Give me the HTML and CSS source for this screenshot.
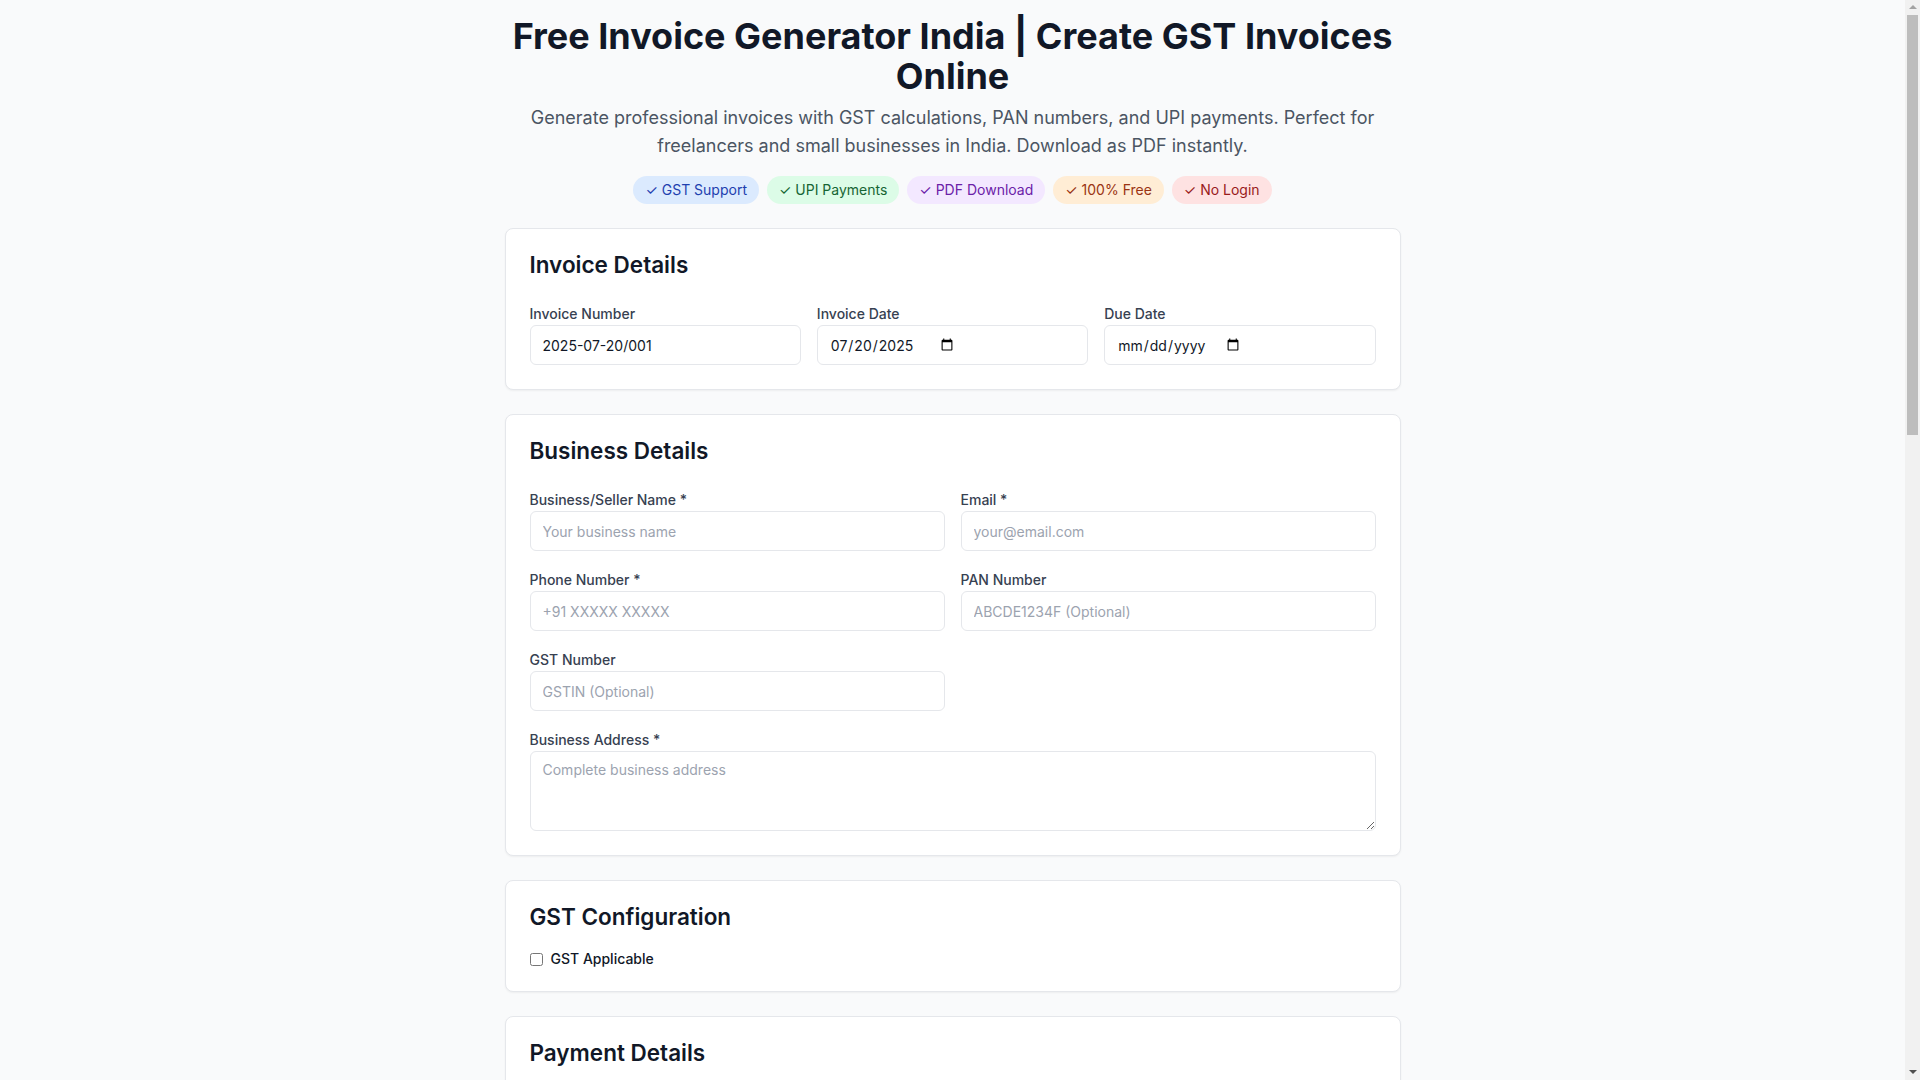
FILE: index.html
```html
<!DOCTYPE html>
<html lang="en">
<head>
<meta charset="utf-8">
<title>Free Invoice Generator India | Create GST Invoices Online</title>
<link rel="stylesheet" href="styles.css">
</head>
<body>
<main class="page">
  <header class="hero">
    <h1 class="hero-title">Free Invoice Generator India | Create GST Invoices Online</h1>
    <p class="hero-sub">Generate professional invoices with GST calculations, PAN numbers, and UPI payments. Perfect for freelancers and small businesses in India. Download as PDF instantly.</p>
    <div class="badges">
      <span class="badge badge-blue">✓ GST Support</span>
      <span class="badge badge-green">✓ UPI Payments</span>
      <span class="badge badge-purple">✓ PDF Download</span>
      <span class="badge badge-orange">✓ 100% Free</span>
      <span class="badge badge-red">✓ No Login</span>
    </div>
  </header>

  <section class="card">
    <h2 class="card-title">Invoice Details</h2>
    <div class="grid grid-3">
      <div class="field">
        <label class="label">Invoice Number</label>
        <input class="input" type="text" value="2025-07-20/001">
      </div>
      <div class="field">
        <label class="label">Invoice Date</label>
        <input class="input input-date" type="date" value="2025-07-20">
      </div>
      <div class="field">
        <label class="label">Due Date</label>
        <input class="input input-date" type="date">
      </div>
    </div>
  </section>

  <section class="card">
    <h2 class="card-title">Business Details</h2>
    <div class="grid grid-2">
      <div class="field">
        <label class="label">Business/Seller Name *</label>
        <input class="input" type="text" placeholder="Your business name">
      </div>
      <div class="field">
        <label class="label">Email *</label>
        <input class="input" type="email" placeholder="your@email.com">
      </div>
      <div class="field">
        <label class="label">Phone Number *</label>
        <input class="input" type="tel" placeholder="+91 XXXXX XXXXX">
      </div>
      <div class="field">
        <label class="label">PAN Number</label>
        <input class="input" type="text" placeholder="ABCDE1234F (Optional)">
      </div>
      <div class="field">
        <label class="label">GST Number</label>
        <input class="input" type="text" placeholder="GSTIN (Optional)">
      </div>
      <div class="field"></div>
      <div class="field span-2">
        <label class="label">Business Address *</label>
        <textarea class="input textarea" placeholder="Complete business address"></textarea>
      </div>
    </div>
  </section>

  <section class="card card-compact">
    <h2 class="card-title title-tight">GST Configuration</h2>
    <label class="check-row">
      <input class="checkbox" type="checkbox">
      <span>GST Applicable</span>
    </label>
  </section>

  <section class="card">
    <h2 class="card-title">Payment Details</h2>
    <div class="grid grid-2">
      <div class="field">
        <label class="label">UPI ID</label>
        <input class="input" type="text" placeholder="yourname@upi">
      </div>
      <div class="field">
        <label class="label">Bank Name</label>
        <input class="input" type="text" placeholder="Bank name (Optional)">
      </div>
      <div class="field">
        <label class="label">Account Number</label>
        <input class="input" type="text" placeholder="Account number (Optional)">
      </div>
      <div class="field">
        <label class="label">IFSC Code</label>
        <input class="input" type="text" placeholder="IFSC code (Optional)">
      </div>
    </div>
  </section>

  <section class="card">
    <h2 class="card-title">Client Details</h2>
    <div class="grid grid-2">
      <div class="field">
        <label class="label">Client Name *</label>
        <input class="input" type="text" placeholder="Client or company name">
      </div>
      <div class="field">
        <label class="label">Client Email</label>
        <input class="input" type="email" placeholder="client@email.com">
      </div>
      <div class="field">
        <label class="label">Client Phone</label>
        <input class="input" type="tel" placeholder="+91 XXXXX XXXXX">
      </div>
      <div class="field">
        <label class="label">Client GST Number</label>
        <input class="input" type="text" placeholder="GSTIN (Optional)">
      </div>
      <div class="field span-2">
        <label class="label">Client Address *</label>
        <textarea class="input textarea" placeholder="Complete client address"></textarea>
      </div>
    </div>
  </section>

  <section class="card">
    <h2 class="card-title">Invoice Items</h2>
    <div class="items-head">
      <span>Description</span><span>Qty</span><span>Rate (₹)</span><span>Amount (₹)</span>
    </div>
    <div class="items-row">
      <input class="input" type="text" placeholder="Item or service description">
      <input class="input" type="number" value="1">
      <input class="input" type="number" value="0">
      <span class="amount">₹0.00</span>
    </div>
    <button class="btn-secondary" type="button">+ Add Item</button>
  </section>

  <section class="card">
    <h2 class="card-title">Notes &amp; Terms</h2>
    <div class="field">
      <label class="label">Notes</label>
      <textarea class="input textarea" placeholder="Thank you for your business!"></textarea>
    </div>
  </section>

  <section class="card">
    <h2 class="card-title">Summary</h2>
    <div class="summary-row"><span>Subtotal</span><span>₹0.00</span></div>
    <div class="summary-row"><span>GST</span><span>₹0.00</span></div>
    <div class="summary-row summary-total"><span>Total</span><span>₹0.00</span></div>
    <div class="actions">
      <button class="btn-primary" type="button">Download PDF</button>
      <button class="btn-secondary" type="button">Preview Invoice</button>
    </div>
  </section>

  <footer class="footer">Free invoice generator for freelancers and small businesses in India.</footer>
</main>

<div class="scrollbar" aria-hidden="true">
  <span class="sb-arrow sb-up"></span>
  <span class="sb-thumb"></span>
  <span class="sb-arrow sb-down"></span>
</div>
</body>
</html>
```
FILE: styles.css
```css
* { box-sizing: border-box; }

html, body {
  margin: 0;
  background: #f9fafb;
  font-family: Inter, "Noto Sans", "Liberation Sans", sans-serif;
  color: #111827;
}

body { padding-right: 15px; }

.page {
  max-width: 896px;
  margin: 0 auto;
  padding: 16px 0 40px;
}

.hero { text-align: center; }

.hero-title {
  margin: 0 0 8px;
  font-size: 36px;
  line-height: 40px;
  font-weight: 700;
  color: #111827;
}

.hero-sub {
  margin: 0 0 16px;
  font-size: 18px;
  line-height: 28px;
  color: #4b5563;
}

.badges {
  display: flex;
  flex-wrap: wrap;
  justify-content: center;
  gap: 8px;
  margin-bottom: 24px;
}

.badge {
  font-size: 14px;
  line-height: 20px;
  padding: 4px 12px;
  border-radius: 9999px;
}
.badge-blue { background: #dbeafe; color: #1e40af; }
.badge-green { background: #dcfce7; color: #166534; }
.badge-purple { background: #f3e8ff; color: #6b21a8; }
.badge-orange { background: #ffedd5; color: #9a3412; }
.badge-red { background: #fee2e2; color: #991b1b; }

.card {
  background: #ffffff;
  border: 1px solid #e5e7eb;
  border-radius: 8px;
  box-shadow: 0 1px 2px rgba(0, 0, 0, 0.05);
  padding: 24px;
  margin-bottom: 24px;
}
.card-compact { padding-bottom: 22px; }

.card-title {
  margin: 0 0 27px;
  font-size: 22.5px;
  line-height: 24px;
  font-weight: 600;
  color: #111827;
}
.title-tight { margin-bottom: 20px; }

.grid {
  display: grid;
  column-gap: 16px;
  row-gap: 19px;
}
.grid-3 { grid-template-columns: repeat(3, 1fr); }
.grid-2 { grid-template-columns: repeat(2, 1fr); }
.span-2 { grid-column: span 2; }

.field { display: flex; flex-direction: column; }

.label {
  display: block;
  font-size: 14px;
  line-height: 20px;
  font-weight: 500;
  color: #374151;
  margin-bottom: 1px;
}

.input {
  display: block;
  width: 100%;
  height: 40px;
  padding: 0 12px;
  border: 1px solid #e5e7eb;
  border-radius: 6px;
  background: #ffffff;
  font-family: inherit;
  font-size: 14px;
  color: #111827;
}
.input::placeholder { color: #9ca3af; }

.input-date::-webkit-datetime-edit { flex: 0 0 auto; }
.input-date::-webkit-calendar-picker-indicator { margin-left: -1px; }

.textarea {
  height: 80px;
  padding: 8px 12px;
  line-height: 20px;
  resize: vertical;
}

.check-row {
  display: flex;
  align-items: center;
  gap: 8px;
  font-size: 14px;
  line-height: 20px;
  font-weight: 500;
  color: #111827;
}
.checkbox {
  margin: 0;
  width: 13px;
  height: 13px;
}

.items-head,
.items-row {
  display: grid;
  grid-template-columns: 1fr 100px 140px 140px;
  gap: 12px;
  align-items: center;
}
.items-head {
  font-size: 14px;
  line-height: 20px;
  font-weight: 500;
  color: #374151;
  margin-bottom: 8px;
}
.items-row { margin-bottom: 16px; }
.amount { font-size: 14px; color: #111827; text-align: right; }

.summary-row {
  display: flex;
  justify-content: space-between;
  font-size: 14px;
  line-height: 20px;
  color: #374151;
  padding: 6px 0;
}
.summary-total {
  font-size: 18px;
  line-height: 28px;
  font-weight: 700;
  color: #111827;
  border-top: 1px solid #e5e7eb;
  margin-top: 6px;
  padding-top: 10px;
}

.actions {
  display: flex;
  gap: 12px;
  margin-top: 20px;
}

.btn-primary,
.btn-secondary {
  font-family: inherit;
  font-size: 14px;
  font-weight: 500;
  height: 40px;
  padding: 0 16px;
  border-radius: 6px;
  cursor: pointer;
}
.btn-primary { background: #2563eb; color: #ffffff; border: 1px solid #2563eb; }
.btn-secondary { background: #ffffff; color: #374151; border: 1px solid #d1d5db; }

.footer {
  text-align: center;
  font-size: 14px;
  line-height: 20px;
  color: #6b7280;
  padding: 16px 0;
}

/* window scrollbar, drawn over the right edge */
.scrollbar {
  position: fixed;
  top: 0;
  right: 0;
  width: 15px;
  height: 100vh;
  background: #f1f1f1;
  display: flex;
  flex-direction: column;
  align-items: center;
}
.sb-arrow {
  width: 0;
  height: 0;
  border-left: 4px solid transparent;
  border-right: 4px solid transparent;
  flex: none;
}
.sb-up {
  border-bottom: 4px solid #a3a3a3;
  margin: 5px 0 2px;
}
.sb-thumb {
  width: 11px;
  height: 420px;
  margin-top: 4px;
  background: #bdbdbd;
  flex: none;
}
.sb-down {
  border-top: 4px solid #505050;
  margin: auto 0 6px;
}
```
